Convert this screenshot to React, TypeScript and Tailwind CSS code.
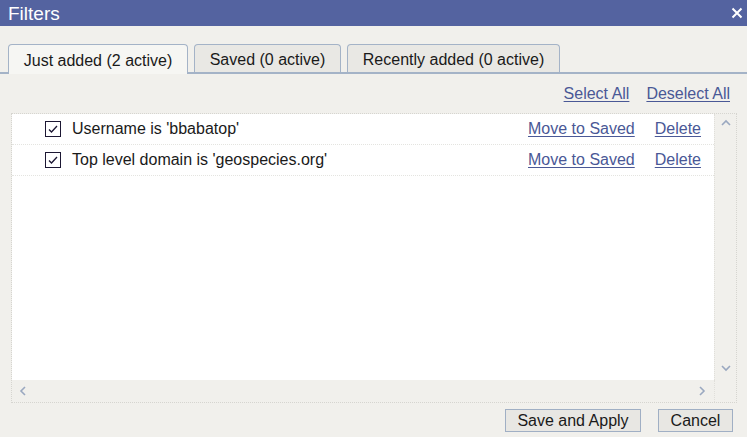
import React from 'react';

const filters = [
  { label: "Username is 'bbabatop'" },
  { label: "Top level domain is 'geospecies.org'" },
];

const tabs = [
  { label: 'Just added (2 active)', active: true, w: 'w-[180px]' },
  { label: 'Saved (0 active)', active: false, w: 'w-[147px]' },
  { label: 'Recently added (0 active)', active: false, w: 'w-[213px]' },
];

const CheckBox: React.FC = () => (
  <span className="flex items-center justify-center w-[16px] h-[16px] border border-[#1c1733] bg-white">
    <svg width="12" height="12" viewBox="0 0 12 12">
      <path d="M2 6.5 L4.5 9 L10 3" fill="none" stroke="#1c1733" strokeWidth="1.3" />
    </svg>
  </span>
);

const Chevron: React.FC<{ dir: 'up' | 'down' | 'left' | 'right' }> = ({ dir }) => {
  const d = {
    up: 'M2 8 L6 4 L10 8',
    down: 'M2 4 L6 8 L10 4',
    left: 'M8 2 L4 6 L8 10',
    right: 'M4 2 L8 6 L4 10',
  }[dir];
  return (
    <svg width="12" height="12" viewBox="0 0 12 12">
      <path d={d} fill="none" stroke="#9aa8c0" strokeWidth="1.6" />
    </svg>
  );
};

export default function App() {
  return (
    <div className="w-[747px] h-[437px] bg-[#f1f0ec] flex flex-col text-[16px] text-[#1a1a1a] overflow-hidden" style={{ fontFamily: '"Liberation Sans", Arial, sans-serif' }}>
      <div className="h-[26px] bg-[#5463a0] flex items-center justify-between pl-[8px] pr-[4px] shrink-0">
        <span className="text-white text-[19px] leading-none">Filters</span>
        <svg width="12" height="12" viewBox="0 0 12 12">
          <path d="M1.5 1.5 L10.5 10.5 M10.5 1.5 L1.5 10.5" stroke="white" strokeWidth="2" />
        </svg>
      </div>

      <div className="mt-[18px] flex items-end gap-[6px] pl-[8px] border-b-2 border-[#a4b3c7] h-[30px] shrink-0">
        {tabs.map((t) => (
          <div
            key={t.label}
            className={`${t.w} flex items-center justify-center rounded-t-[4px] border border-b-0 border-[#a4b3c7] pt-[2px] ${
              t.active ? 'h-[30px] bg-[#f6f6f3] -mb-[2px]' : 'h-[28px] bg-[#e9e8e4]'
            }`}
          >
            {t.label}
          </div>
        ))}
      </div>

      <div className="flex justify-end gap-[17px] pr-[17px] h-[39px] items-center shrink-0 text-[#4a5896]">
        <span className="underline underline-offset-2">Select All</span>
        <span className="underline underline-offset-2">Deselect All</span>
      </div>

      <div className="ml-[11px] mr-[10px] h-[290px] border border-dotted border-[#d6d5d0] flex flex-col bg-[#f1f0ec]">
        <div className="flex flex-1 min-h-0">
          <div className="flex-1 bg-white flex flex-col">
            {filters.map((f) => (
              <div key={f.label} className="h-[31px] flex items-center border-b border-dotted border-[#e4e4e0] pl-[33px] pr-[13px]">
                <CheckBox />
                <span className="ml-[11px] flex-1">{f.label}</span>
                <span className="underline underline-offset-2 text-[#4a5896]">Move to Saved</span>
                <span className="ml-[20px] underline underline-offset-2 text-[#4a5896]">Delete</span>
              </div>
            ))}
          </div>
          <div className="w-[22px] bg-[#f1f0ec] flex flex-col items-center justify-between pt-[3px] pb-[6px] border-l border-dotted border-[#e0dfda]">
            <Chevron dir="up" />
            <Chevron dir="down" />
          </div>
        </div>
        <div className="h-[22px] flex shrink-0">
          <div className="flex-1 flex items-center justify-between pl-[5px] pr-[6px]">
            <Chevron dir="left" />
            <Chevron dir="right" />
          </div>
          <div className="w-[22px] border-l border-dotted border-[#e0dfda]" />
        </div>
      </div>

      <div className="flex justify-end gap-[17px] pr-[14px] mt-[6px]">
        <button className="h-[23px] w-[136px] border border-[#a0afc4] bg-[#e8e7e3] text-[16px] leading-none">Save and Apply</button>
        <button className="h-[23px] w-[75px] border border-[#a0afc4] bg-[#e8e7e3] text-[16px] leading-none">Cancel</button>
      </div>
    </div>
  );
}
